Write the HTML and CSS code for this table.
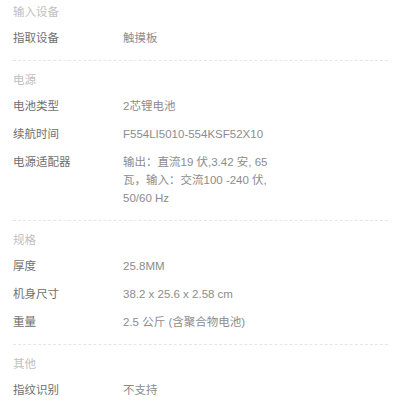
FILE: index.html
```html
<!DOCTYPE html>
<html lang="zh">
<head>
  <meta charset="UTF-8">
  <meta name="viewport" content="width=device-width, initial-scale=1.0">
  <title>规格参数</title>
  <link rel="stylesheet" href="styles.css">
</head>
<body>
<div class="specs">
  <div class="section">
    <div class="section-title">输入设备</div>
    <div class="row"><span class="label">指取设备</span><span class="value">触摸板</span></div>
  </div>
  <div class="section">
    <div class="section-title">电源</div>
    <div class="row"><span class="label">电池类型</span><span class="value">2芯锂电池</span></div>
    <div class="row"><span class="label">续航时间</span><span class="value">F554LI5010-554KSF52X10</span></div>
    <div class="row"><span class="label">电源适配器</span><span class="value narrow">输出：直流19 伏,3.42 安, 65 瓦，输入：交流100 -240 伏, 50/60 Hz</span></div>
  </div>
  <div class="section">
    <div class="section-title">规格</div>
    <div class="row"><span class="label">厚度</span><span class="value">25.8MM</span></div>
    <div class="row"><span class="label">机身尺寸</span><span class="value">38.2 x 25.6 x 2.58 cm</span></div>
    <div class="row"><span class="label">重量</span><span class="value">2.5 公斤 (含聚合物电池)</span></div>
  </div>
  <div class="section">
    <div class="section-title">其他</div>
    <div class="row"><span class="label">指纹识别</span><span class="value">不支持</span></div>
  </div>
</div>
</body>
</html>
```

FILE: styles.css
```css
body {
  font-family: "Liberation Sans", "Noto Sans CJK SC", sans-serif;
  font-size: 11.5px;
  margin: 0;
  padding: 0;
  background-color: #fff;
}
.specs {
  padding: 0 12px 0 13px;
}
.section {
  padding: 7px 0 8px;
  border-bottom: 1px dashed #e6e6e6;
}
.section:first-child {
  padding-top: 0;
}
.section-title {
  line-height: 24px;
  color: #c0c0c0;
}
.row {
  display: flex;
  padding: 5px 0;
  line-height: 18px;
}
.label {
  width: 110px;
  flex-shrink: 0;
  color: #707070;
}
.value {
  color: #8c8c8c;
}
.narrow {
  max-width: 148px;
}
```
